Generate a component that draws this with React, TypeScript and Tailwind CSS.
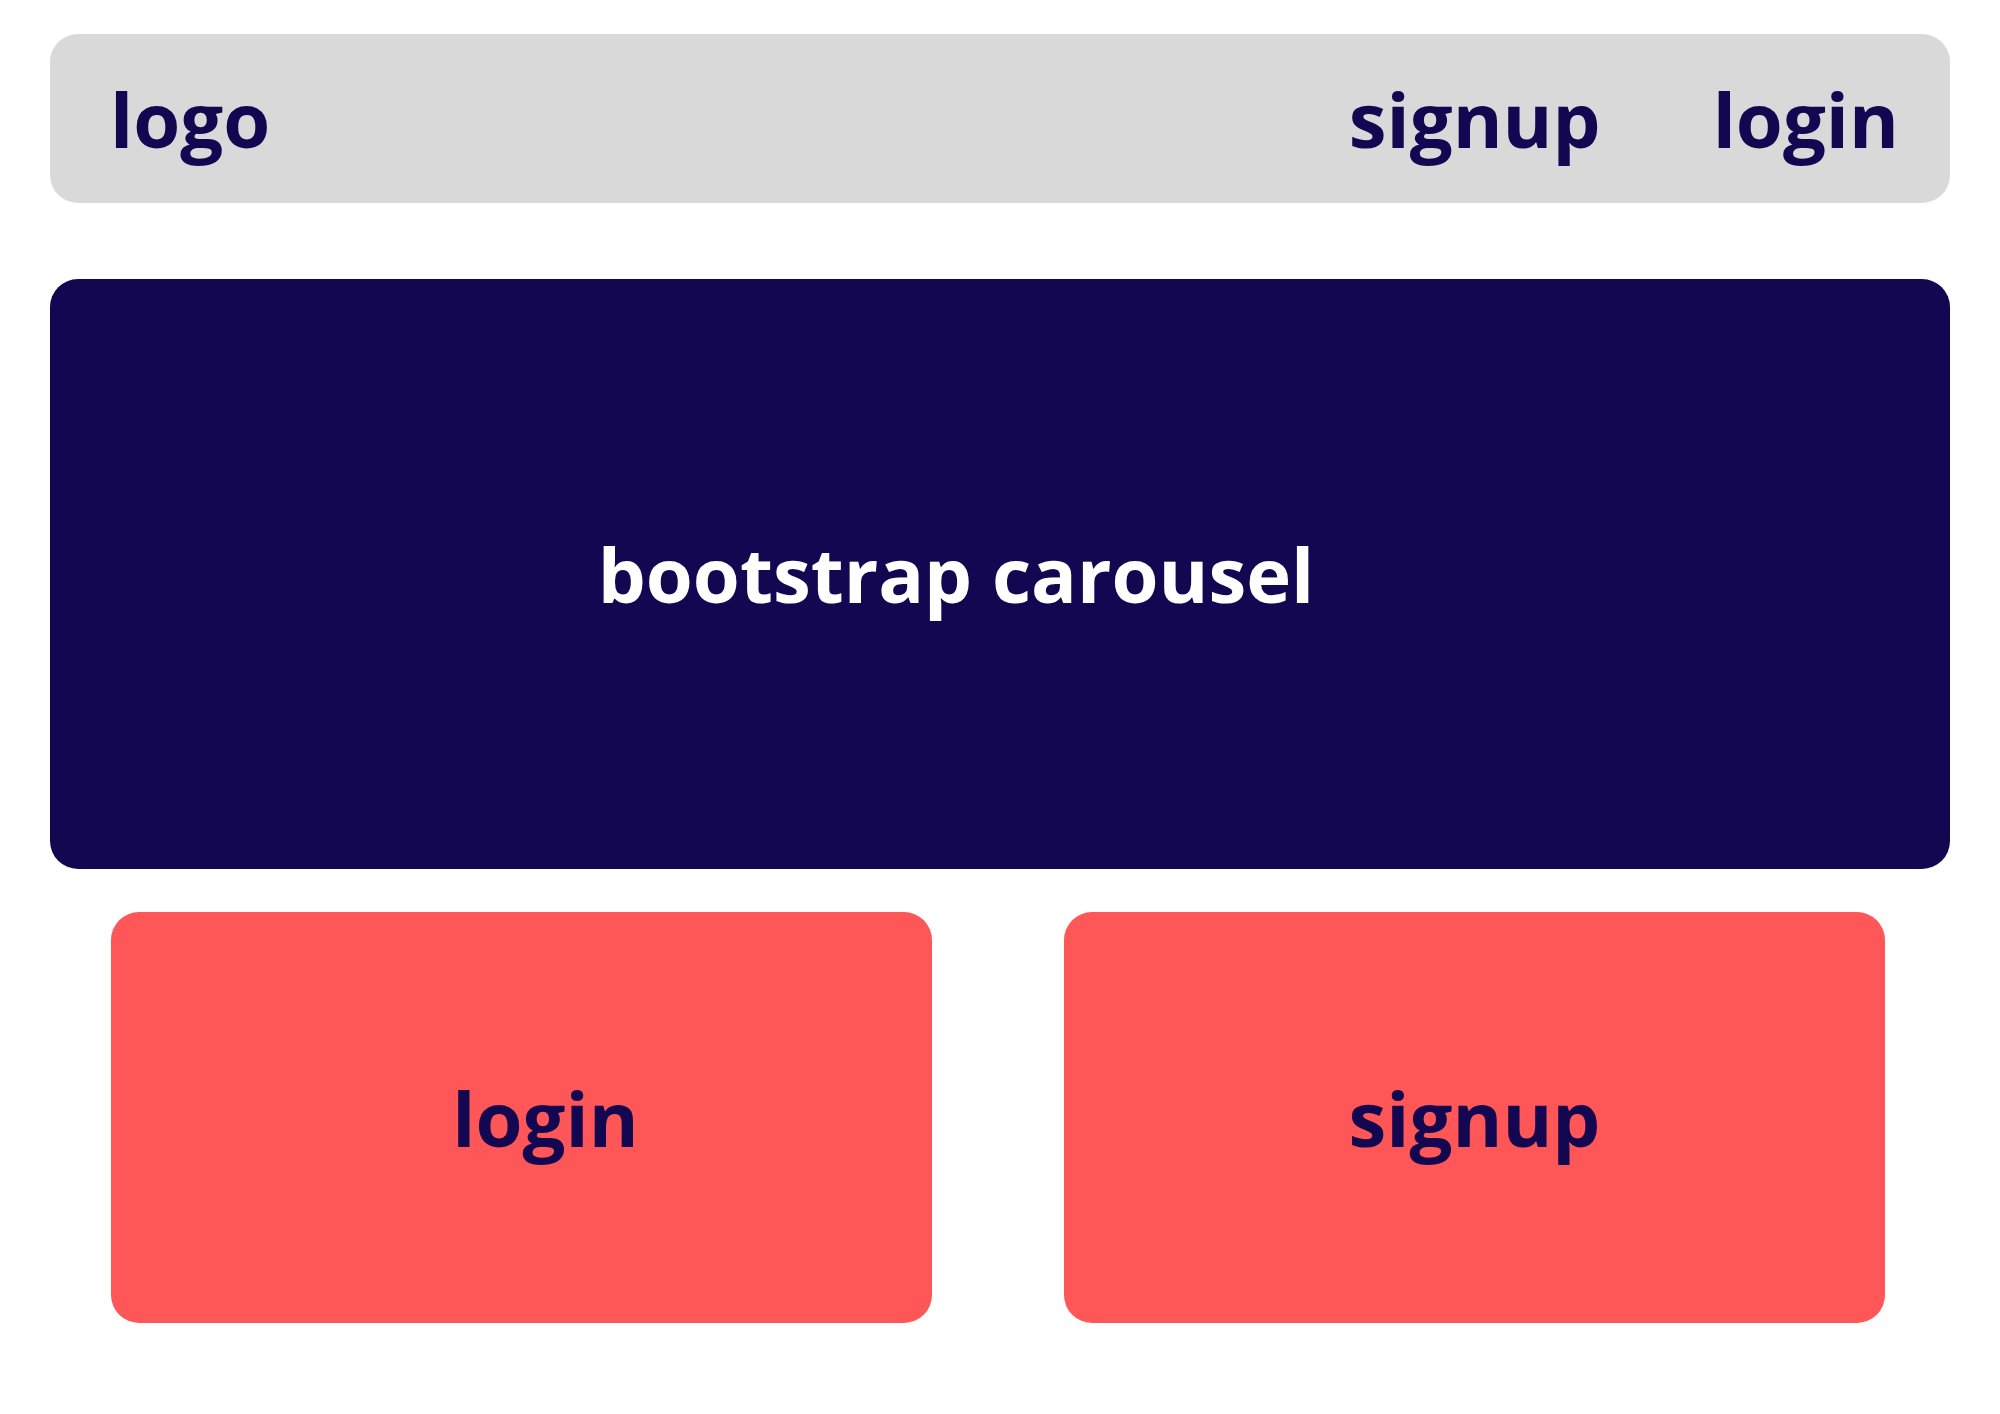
const App = () => {
  return (
    <div className="w-[2000px] min-h-[1414px] bg-white px-[50px] pt-[34px] font-['Open_Sans',sans-serif] font-bold">

      <header className="h-[169px] bg-[#d9d9d9] rounded-[28px] flex items-center justify-between pl-[60px] pr-[51px] text-[#120750] text-[76px] leading-none">
        <span>logo</span>
        <nav className="flex items-center gap-[112px]">
          <span>signup</span>
          <span>login</span>
        </nav>
      </header>

      <section className="mt-[76px] h-[590px] bg-[#120750] rounded-[28px] flex items-center justify-center pr-[88px] text-white text-[76px] leading-none">
        bootstrap carousel
      </section>

      <div className="mt-[43px] pl-[61px] pr-[65px] grid grid-cols-2 gap-[132px]">
        <div className="h-[411px] bg-[#ff5757] rounded-[28px] flex items-center justify-center pl-[48px] text-[#120750] text-[76px] leading-none">
          login
        </div>
        <div className="h-[411px] bg-[#ff5757] rounded-[28px] flex items-center justify-center text-[#120750] text-[76px] leading-none">
          signup
        </div>
      </div>

    </div>
  )
}

export default App;
